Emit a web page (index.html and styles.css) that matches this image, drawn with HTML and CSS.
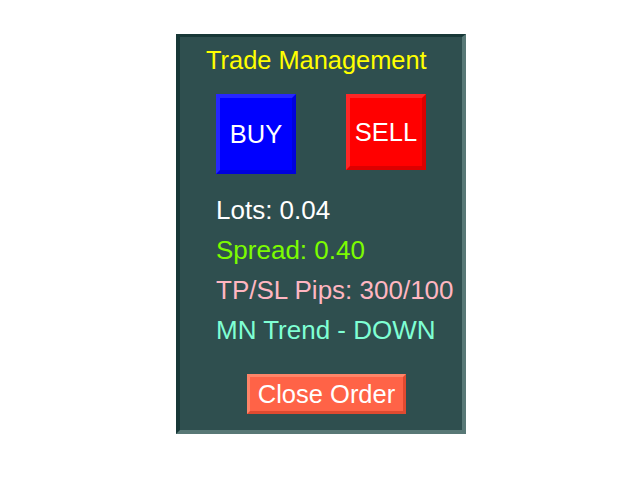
FILE: index.html
```html
<!DOCTYPE html>
<html>
<head>
<meta charset="utf-8">
<link rel="stylesheet" href="styles.css">
</head>
<body>
<div class="panel">
  <div class="title">Trade Management</div>
  <div class="buttons">
    <div class="btn buy">BUY</div>
    <div class="btn sell">SELL</div>
  </div>
  <div class="info">
    <div class="line lots">Lots: 0.04</div>
    <div class="line spread">Spread: 0.40</div>
    <div class="line tpsl">TP/SL Pips: 300/100</div>
    <div class="line trend">MN Trend - DOWN</div>
  </div>
  <div class="close-row">
    <div class="close">Close Order</div>
  </div>
</div>
</body>
</html>
```
FILE: styles.css
```css
html, body {
  margin: 0;
  padding: 0;
  background: #ffffff;
}
body {
  font-family: "Liberation Sans", Arial, sans-serif;
  font-size: 25.5px;
}
.panel {
  box-sizing: border-box;
  margin: 34px 0 0 176px;
  width: 290px;
  height: 400px;
  background: #2f4f4f;
  border-top: 3px solid #173837;
  border-left: 4px solid #173837;
  border-right: 4px solid #587876;
  border-bottom: 4px solid #587876;
}
.title {
  color: #ffff00;
  font-size: 25.4px;
  line-height: 30px;
  margin-top: 8px;
  padding-left: 26px;
  white-space: nowrap;
}
.buttons {
  display: flex;
  align-items: flex-start;
  gap: 50px;
  margin-top: 19px;
  padding-left: 36px;
}
.btn {
  box-sizing: border-box;
  width: 80px;
  display: flex;
  align-items: center;
  justify-content: center;
  color: #ffffff;
  border: 4px solid;
}
.buy {
  height: 80px;
  background: #0000ff;
  border-color: #2626ff #0000dc #0000dc #2626ff;
}
.sell {
  height: 76px;
  background: #ff0000;
  border-color: #ff2626 #dc0000 #dc0000 #ff2626;
}
.info {
  margin-top: 16px;
  padding-left: 36px;
}
.line {
  font-size: 26px;
  line-height: 40px;
  height: 40px;
  white-space: nowrap;
}
.lots { color: #ffffff; }
.spread { color: #7cfc00; }
.tpsl { color: #ffb6c1; }
.trend { color: #7fffd4; }
.close-row {
  margin-top: 24px;
  padding-left: 67px;
}
.close {
  box-sizing: border-box;
  width: 159px;
  height: 40px;
  display: flex;
  align-items: center;
  justify-content: center;
  color: #ffffff;
  background: #ff6347;
  border: 3px solid;
  border-color: #ff8468 #e04a30 #e04a30 #ff8468;
}
```
